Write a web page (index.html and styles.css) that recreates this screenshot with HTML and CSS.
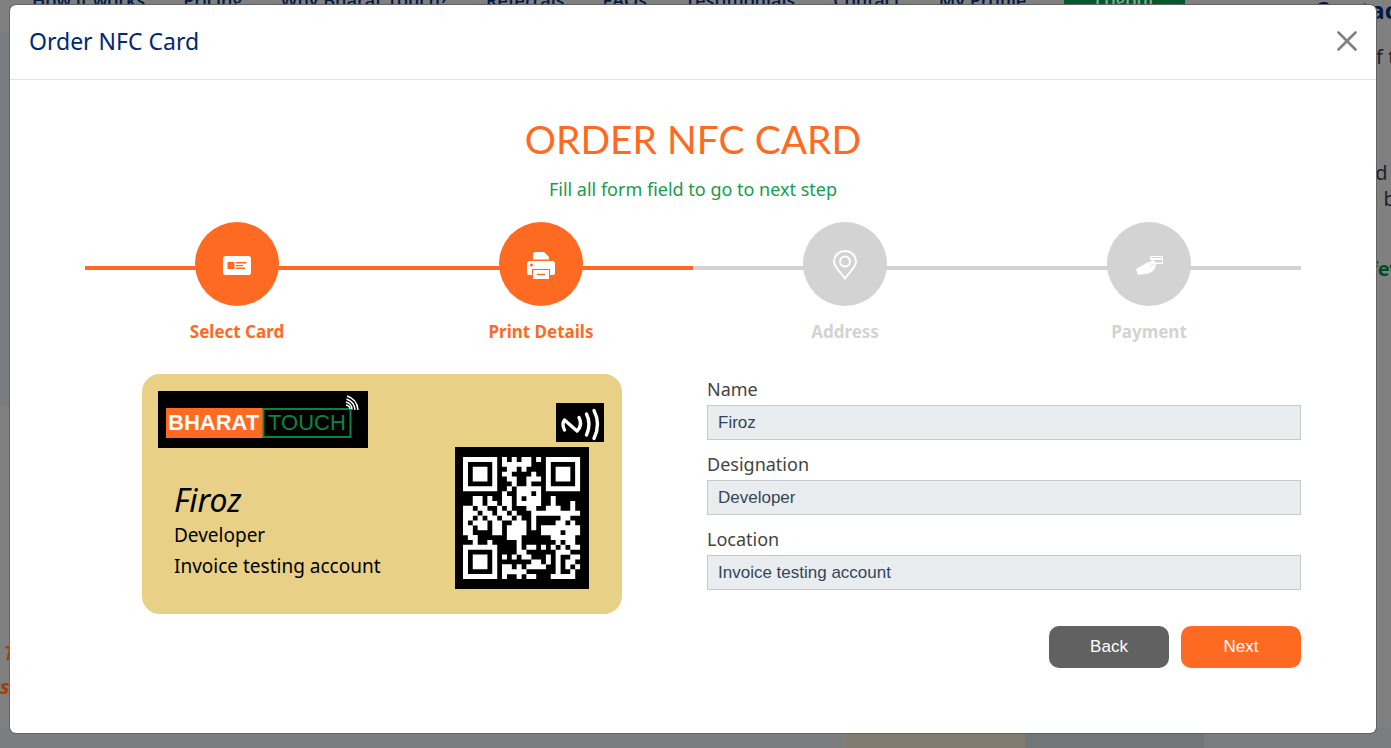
FILE: index.html
```html
<!DOCTYPE html>
<html lang="en">
<head>
<meta charset="utf-8">
<title>Order NFC Card</title>
<link rel="stylesheet" href="styles.css">
</head>
<body>
<div class="page" aria-hidden="true">
  <header class="site-head">
    <nav class="nav">
      <span>How it works</span><span>Pricing</span><span>Why Bharat Touch?</span><span>Referrals</span><span>FAQs</span><span>Testimonials</span><span>Contact</span><span>My Profile</span><span class="logout">Logout</span>
    </nav>
    <div class="side-title">Contact</div>
  </header>
  <div class="side-copy"><p>of the</p><p class="lower">ed to</p><p class="indent">a bit</p><p class="few">few</p></div>
  <div class="band"></div>
  <div class="left-copy"><span>T</span><br>s</div>
  <div class="strip"><i></i><i class="sand"></i><i class="teal"></i><i></i></div>
</div>
<div class="overlay">
<section class="dialog" role="dialog" aria-labelledby="dlg-title">
  <header class="dialog-head">
    <h5 id="dlg-title">Order NFC Card</h5>
    <button class="close" type="button" aria-label="Close"><svg width="20" height="20" viewBox="0 0 20 20"><path d="M1.5 1.5 18.5 18.5M18.5 1.5 1.5 18.5" stroke="#808080" stroke-width="2.6" stroke-linecap="round"/></svg></button>
  </header>
  <div class="dialog-body">
    <h2>ORDER NFC CARD</h2>
    <p class="hint">Fill all form field to go to next step</p>
    <ol class="steps">
      <li class="done"><span class="dot"><svg width="28" height="28" viewBox="0 0 28 28"><rect y="5" width="28" height="19" rx="2.5" fill="#fff"/><path d="M4.500 11h7v7h-7zM13 11h10.500v1.500H13zM13 14h7v1.200h-7zM13 16.500h9V18h-9z" fill="#ff6a22"/></svg></span><span>Select Card</span></li>
      <li class="done"><span class="dot"><svg width="28" height="28" viewBox="0 0 28 28"><path d="M6 8.500V3q0-2 2-2h9l5 5v2.500zM3 10h22q3 0 3 3v9q0 2-2 2h-3v-6H5v6H2q-2 0-2-2v-9q0-3 3-3z" fill="#fff"/><path d="M6 19h16v9H6z" fill="#fff"/><circle cx="4.500" cy="14" r="1.500" fill="#ff6a22"/><path d="M10 23.500h8" stroke="#ff6a22" stroke-width="1.400"/></svg></span><span>Print Details</span></li>
      <li><span class="dot"><svg width="28" height="30" viewBox="0 0 28 30" fill="none" stroke="#fff" stroke-width="2"><path d="M14 28.500C11 24 3 17 3 11.500a11 10.500 0 0 1 22 0C25 17 17 24 14 28.500z"/><circle cx="14" cy="11.500" r="5"/></svg></span><span>Address</span></li>
      <li><span class="dot"><svg width="28" height="28" viewBox="0 0 28 28"><path d="M16 5h12v8h-8v-1.500h7V9H15V5z" fill="#fff"/><path d="M16 6.500h11" stroke="#d3d3d3"/><path d="M1 18 8 14q3-2 6-3l5-2 2 4q0 4-3 7-2 2-5 2.500L3 24z" fill="#fff"/><path d="m15 16 4-3" stroke="#d3d3d3" stroke-width=".7"/></svg></span><span>Payment</span></li>
    </ol>
    <div class="columns">
      <div class="card">
        <div class="card-left">
          <svg class="logo" width="210" height="57" viewBox="0 0 210 57" role="img" aria-label="Bharat Touch">
            <rect width="210" height="57"/><rect x="8" y="17" width="97" height="30" fill="#ff6a22"/><rect x="105.5" y="18" width="87" height="28" fill="none" stroke="#0b8443" stroke-width="2"/>
            <text x="10" y="39" class="logo-b">BHARAT</text><text x="110" y="39" class="logo-t">TOUCH</text>
            <g fill="none" stroke="#fff" stroke-width="1.5"><path d="M189 5q10 3 11 14M188.5 8q8 3 8.500 11M188 11q6 2 6 7.500M188 14q4 1 4 4"/></g>
          </svg>
          <div class="person"><h3>Firoz</h3><p>Developer</p><p>Invoice testing account</p></div>
        </div>
        <div class="card-right">
          <svg class="nfc" width="48" height="39" viewBox="0 0 48 39" fill="none" stroke="#fff" stroke-width="3.4" stroke-linecap="round" stroke-linejoin="round"><rect width="48" height="39" fill="#000" stroke="none"/><path d="M8.500 27Q5.500 21 8.500 17L21 28Q27 22 23 14.500M30.500 11Q35.500 21 30.500 32M38 7.500Q45 21 38 35.500"/></svg>
          <svg class="qr" id="qr" width="134" height="142" viewBox="0 0 134 142" role="img" aria-label="QR code"><rect width="134" height="142"/></svg>
        </div>
      </div>
      <form class="form">
        <label for="name">Name</label><input id="name" value="Firoz" readonly>
        <label for="desig">Designation</label><input id="desig" value="Developer" readonly>
        <label for="loc">Location</label><input id="loc" value="Invoice testing account" readonly>
        <div class="actions"><button class="back" type="button">Back</button><button class="next" type="button">Next</button></div>
      </form>
    </div>
  </div>
</section>
</div>
<script src="qr.js"></script>
</body>
</html>
```
FILE: styles.css
```css
*{box-sizing:border-box}
body{margin:0;font-family:"Noto Sans",sans-serif;background:#808080;height:100vh;overflow:hidden}
h2,h3,h5,p,ol{margin:0;padding:0}
.page{position:absolute;inset:0;overflow:hidden;color:#001a48;display:flex;flex-direction:column;background:#808080}
.site-head{display:flex;height:32px;flex:none}
.nav{display:flex;gap:38px;padding-left:32px;font:600 18px/24px "Open Sans",sans-serif;margin-top:-12px;white-space:nowrap;height:24px}
.logout{background:#005a2b;color:#88a894;width:121px;text-align:center}
.side-title{position:absolute;left:1314px;top:-6px;font:700 24px/32px "Open Sans",sans-serif}
.side-copy{position:absolute;left:1364px;top:44px;color:#222;font-size:20px;line-height:26px;white-space:nowrap}
.lower{padding-top:90px}
.indent{padding-left:3px}
.few{color:#004d26;font-weight:700;padding:44px 0 0 6px}
.band{height:374px;width:12px;background:#7b7c80}
.left-copy{padding-top:230px;flex:1;color:#a63c08;font:italic 700 20px/34px "Open Sans",sans-serif}
.left-copy span{padding-left:4px}
.strip{display:grid;grid-template-columns:846fr 179fr 179fr 187fr;height:20px;background:#7c7d7f}
.strip .sand{background:#807c70}
.strip .teal{background:#707777}
.overlay{position:relative;height:100vh;padding:5px 15px 15px 10px}
.dialog{height:100%;background:#fff;border-radius:6px;box-shadow:0 0 0 1px #626262}
.dialog-head{display:flex;align-items:center;justify-content:space-between;height:75px;padding:0 19px 2px;border-bottom:1px solid #dee2e6}
.dialog-head h5{font:400 23px/30px "Noto Sans",sans-serif;color:#012970}
.close{border:0;background:none;padding:0;display:flex;width:20px;height:20px}
.dialog-body{padding:35px 75px}
h2{text-align:center;font:400 39px/48px Lato,sans-serif;color:#ff6a22}
.hint{text-align:center;font-size:18px;line-height:26px;color:#159c4d;margin-top:13px}
.steps{display:grid;grid-template-columns:repeat(4,1fr);list-style:none;margin-top:20px}
.steps li{display:flex;flex-direction:column;align-items:center;color:#d3d3d3;font-weight:700;font-size:17px;line-height:24px;gap:14px;background:linear-gradient(currentColor,currentColor) 0 44px/100% 4px no-repeat}
.steps .done{color:#ff6a22}
.dot{width:84px;height:84px;border-radius:50%;background:currentColor;display:flex;align-items:center;justify-content:center;padding-top:2px}
.columns{display:grid;grid-template-columns:1fr 1fr;gap:28px;margin-top:30px}
.card{justify-self:center;width:480px;height:240px;border-radius:18px;background:#e8d087;display:flex;justify-content:space-between;padding:17px 16px}
.logo-b{font:700 22px "Liberation Sans",sans-serif;fill:#fff}
.logo-t{font:400 22px "Liberation Sans",sans-serif;fill:#0b8443}
.person{padding:27px 0 0 16px;color:#000;font-size:19px;line-height:31px}
.person h3{font:italic 400 32px/40px "Noto Sans",sans-serif}
.card-right{display:flex;flex-direction:column;align-items:flex-end;padding:12px 2px 0 0;gap:5px}
.qr{margin-right:15px}
.form{display:flex;flex-direction:column;padding-top:2px}
.form label{font-size:18px;line-height:26px;color:#444;margin-bottom:3px}
.form input{height:35px;width:100%;border:1px solid #c6c9cc;background:#e9edf0;color:#34465a;font:17px "Liberation Sans",sans-serif;padding:0 10px;margin:0 0 11px;border-radius:0;outline:0}
.actions{display:flex;justify-content:flex-end;gap:12px;padding-top:25px}
.actions button{width:120px;height:42px;border:0;border-radius:10px;color:#fff;font:17px "Liberation Sans",sans-serif}
.back{background:#616161}
.next{background:#ff6a22}
```
FILE: qr.js
```js
const rows = [
  "11111110101011010" + "1111111",
  "10000010111111000" + "1000001",
  "10111010011010000" + "1011101",
  "10111010110000100" + "1011101",
  "10111010011001110" + "1011101",
  "10000010001001000" + "1000001",
  "11111110010111110" + "1111111",
  "000000001001110100000000",
  "001101001101011100100000",
  "001101101101111100100010",
  "110110010100011001110010",
  "111011011010001111111111",
  "110101101101001000001100",
  "101110110011101000011010",
  "110110110111101011111111",
  "110000110111100011110111",
  "011000000111000000111110",
  "001001000001000000010110",
  "111111100001011010101011",
  "100000100001100000011100",
  "101110101010110001010011",
  "101110100000001101010110",
  "101110101101011110010101",
  "100000101111100000010010",
  "111111101001011000111110"
];
const width = 117 / 24;
const height = 122 / 25;
let d = "";
rows.forEach((row, y) => [...row].forEach((bit, x) => {
  if (bit === "1") d += `M${8 + x * width} ${10 + y * height}h${width + 0.1}v${height + 0.1}h-${width + 0.1}z`;
}));
const path = document.createElementNS("http://www.w3.org/2000/svg", "path");
path.setAttribute("d", d);
path.setAttribute("fill", "#fff");
document.getElementById("qr").append(path);
```
